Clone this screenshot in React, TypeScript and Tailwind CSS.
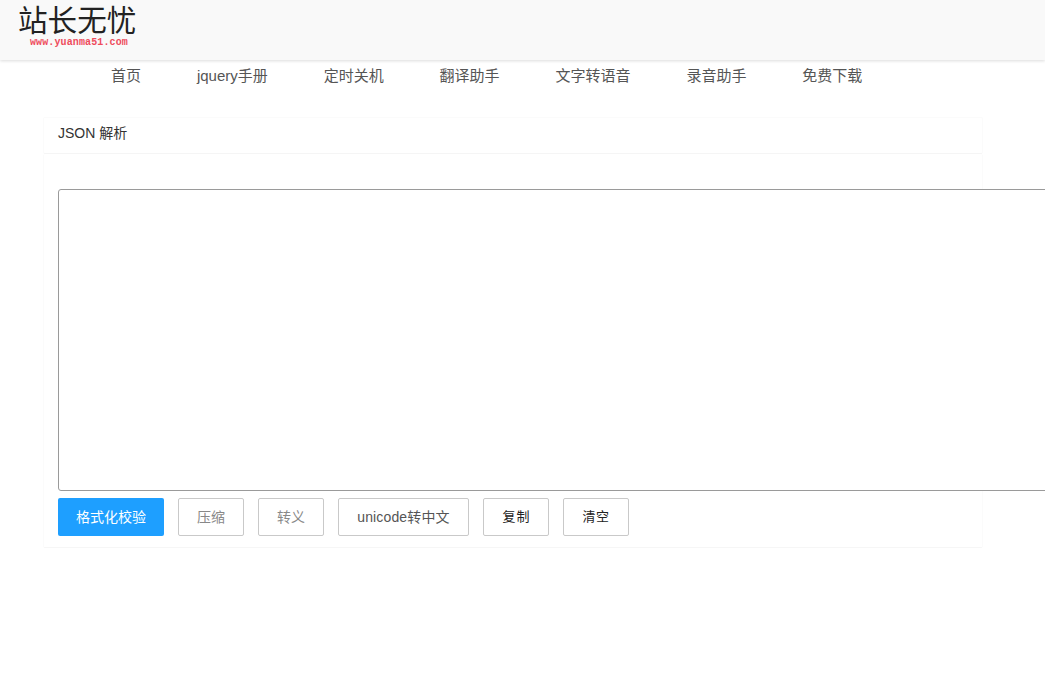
const NAV_ITEMS = ['首页', 'jquery手册', '定时关机', '翻译助手', '文字转语音', '录音助手', '免费下载']

const FONT = "font-['Liberation_Sans','Noto_Sans_CJK_SC',sans-serif]"

function ToolButton({ label, className = 'px-[18px] text-sm text-[#555]' }: { label: string; className?: string }) {
  return (
    <button className={`h-[38px] rounded-[2px] border border-[#c9c9c9] bg-white ${className}`}>
      {label}
    </button>
  )
}

export default function App() {
  return (
    <div className={`h-[700px] w-[1045px] overflow-hidden bg-white ${FONT}`}>
      <header className="h-[60px] bg-[#f9f9f9] pl-[18px] pt-[5px] shadow-[0_1px_3px_rgba(0,0,0,0.14)]">
        <div className="w-[130px]">
          <div className="whitespace-nowrap text-[29.6px] font-normal leading-[32px] text-[#222]">站长无忧</div>
          <div className="mt-[1px] pl-[12px] text-[10px] font-bold leading-[10px] tracking-[0.12px] text-[#ee4c5c] font-['Liberation_Mono',monospace]">
            www.yuanma51.com
          </div>
        </div>
      </header>

      <nav className="flex h-[32px] items-center pl-[83px] text-[15px] text-[#555]">
        {NAV_ITEMS.map((item) => (
          <a key={item} className="px-[27.96px]" href="#">
            {item}
          </a>
        ))}
      </nav>

      <main className="ml-[43px] mt-[25px] w-[940px]">
        <div className="flex h-[37px] items-center rounded-[2px] border border-[#fbfbfb] border-b-[#f5f5f5] px-[14px] pb-[6px] text-sm text-[#333]">
          JSON 解析
        </div>
        <div className="rounded-[2px] border border-[#fbfbfb] border-b-[#f6f6f6] border-t-0 px-[14px] pb-[11px] pt-[35px]">
          <textarea className="block h-[302px] w-[1100px] resize-none rounded-[3px] border border-[#9a9a9a] bg-white" />
          <div className="mt-[7px] flex gap-[14px]">
            <button className="h-[38px] rounded-[2px] bg-[#1e9fff] px-[18px] text-sm text-white">格式化校验</button>
            <ToolButton label="压缩" className="px-[18px] text-sm text-[#888]" />
            <ToolButton label="转义" className="px-[18px] text-sm text-[#888]" />
            <ToolButton label="unicode转中文" className="w-[131px] text-sm tracking-[0.15px] text-[#555]" />
            <ToolButton label="复制" className="w-[66px] pl-[1px] text-[13px] tracking-[1px] text-[#222]" />
            <ToolButton label="清空" className="w-[66px] text-[13px] tracking-[0.5px] text-[#222]" />
          </div>
        </div>
      </main>
    </div>
  )
}
